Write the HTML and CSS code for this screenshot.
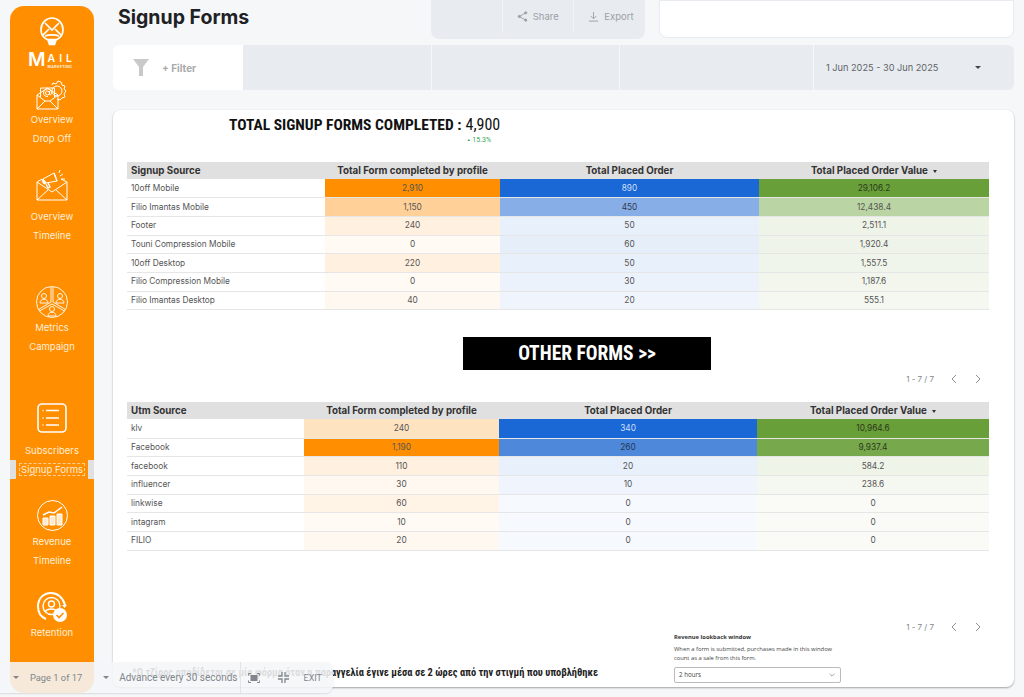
FILE: index.html
```html
<!DOCTYPE html>
<html lang="en">
<head>
    <meta charset="UTF-8">
    <meta name="viewport" content="width=device-width, initial-scale=1.0">
    <title>Signup Forms</title>
    <link rel="stylesheet" href="styles.css">
</head>
<body>
    <div class="app">
        <!-- Sidebar -->
        <nav class="sidebar">
            <svg class="logo-icon" viewBox="0 0 24 29" fill="none" stroke="#fff" stroke-width="1.7">
                <path d="M7 22.500C3 20.500 1 17 1 12.500 1 6 6 1 12 1s11 5 11 11.500c0 4.500-2 8-6 10z"/>
                <path d="M5 6l7 7 7-7M3 18l6-6M21 18l-6-6M5 19c3-1.500 11-1.500 14 0"/>
                <path d="M8 23h8l-1.500 4.500h-5z" fill="#fff"/>
            </svg>
            <div class="logo-text"><span class="logo-m">M</span><span class="logo-rest"><span class="logo-ail">AIL</span><span class="logo-sub">MARKETING</span></span></div>

            <svg class="nav-icon icon-dropoff" viewBox="0 0 32 30" fill="none" stroke="#fff" stroke-width="1">
                <path d="M1 15v14h21V15L11.500 8z"/>
                <path d="M1 15l8 6h5l8-6M1 29l8-8M22 29l-8-8"/>
                <path d="M4.500 17V8h14v9"/>
                <circle cx="11.500" cy="13" r="2"/>
                <path d="M13.500 11v3c0 1.500 2 1 2-1 0-2.500-2-4-4-4s-4 2-4 4 2 4 4.500 3.500"/>
                <path d="M16 5l1-2 3 1 2-3 3 1 1 3 3 1-1 3 2 2-2 3 1 3-3 1-2 2-3-1"/>
                <circle cx="21" cy="11" r="5"/>
            </svg>
            <span class="nav-label">Overview</span>
            <span class="nav-label">Drop Off</span>

            <svg class="nav-icon icon-timeline" viewBox="0 0 32 31" fill="none" stroke="#fff" stroke-width="1">
                <path d="M1 12v18h30V12l-6-3M1 12l5-3M1 12l15 10 15-10M1 30l11-10M31 30L20 20"/>
                <path d="M7 9l11-6 3 8-11 2z"/>
                <path d="M7 9l3 4-2 1-2-3z" fill="#fff"/>
                <path d="M10 14l2 4 2-1-2-4M18 3l3 8" stroke-width="1.400"/>
                <path d="M24 6l3-2M25 9h4M23 3l1-3"/>
            </svg>
            <span class="nav-label">Overview</span>
            <span class="nav-label">Timeline</span>

            <svg class="nav-icon icon-metrics" viewBox="0 0 32 32" fill="none" stroke="#fff" stroke-width=".9">
                <circle cx="16" cy="16" r="15.500"/>
                <path d="M15 1v15L2.500 23.500M17 1v15l12.500 7.500M3.500 25L16 18l12.500 7"/>
                <circle cx="8" cy="10" r="2.500"/>
                <path d="M4 17c0-5 8-5 8 0z"/>
                <circle cx="24" cy="10" r="2.500"/>
                <path d="M20 17c0-5 8-5 8 0z"/>
                <circle cx="16" cy="23" r="2.500"/>
                <path d="M12 30c0-5 8-5 8 0z"/>
            </svg>
            <span class="nav-label">Metrics</span>
            <span class="nav-label">Campaign</span>

            <svg class="nav-icon icon-subs" viewBox="0 0 30 30" fill="none" stroke="#fff" stroke-width="1.600">
                <rect x="1" y="1" width="28" height="28" rx="4"/>
                <path d="M9 7.500h13M9 15h13M9 22h13M5.500 7.500h1M5.500 15h1M5.500 22h1"/>
            </svg>
            <span class="nav-label">Subscribers</span>
            <div class="nav-current">
                <span class="current-tab"></span>
                <span class="nav-label-current">Signup Forms</span>
                <span class="current-tab"></span>
            </div>

            <svg class="nav-icon icon-revenue" viewBox="0 0 31 31" fill="none" stroke="#fff" stroke-width="1">
                <circle cx="15.500" cy="15.500" r="15"/>
                <path d="M6 15l6-3 5 1 8-6" stroke-width="1.400"/>
                <path d="M6 18h5v7H6zM13 16h5v9h-5zM20 14h5v11h-5z" fill="#ffe9cc"/>
            </svg>
            <span class="nav-label">Revenue</span>
            <span class="nav-label">Timeline</span>

            <svg class="nav-icon icon-retention" viewBox="0 0 31 31" fill="none" stroke="#fff" stroke-width="2">
                <path d="M28 13C26 5 20 1 14 1 6 1 1 7 1 14.500 1 20 4 25 9 27"/>
                <path d="M25 13h5l-2.500 3z" fill="#fff" stroke="none"/>
                <circle cx="14.500" cy="14" r="8.500" stroke-width="1.400"/>
                <circle cx="14.500" cy="12" r="3" stroke-width="1.400"/>
                <path d="M8 20c2-4 11-4 12 0" stroke-width="1.400"/>
                <circle cx="23" cy="23" r="7" fill="#fff" stroke="none"/>
                <path d="M19.500 23l2.500 2.500 4.500-4.500" stroke="#ff8f00" stroke-width="1.600"/>
            </svg>
            <span class="nav-label">Retention</span>
        </nav>

        <main class="main">
            <!-- Header -->
            <header class="topbar">
                <h1>Signup Forms</h1>
                <div class="actions">
                    <div class="action-cell"></div>
                    <div class="action-cell">
                        <svg class="action-icon" viewBox="0 0 12 12" fill="none" stroke="#9aa0a6" stroke-width="1">
                            <path d="M9.500 2L2.500 6l7 4"/>
                            <circle cx="9.500" cy="2" r="1.200" fill="#9aa0a6"/>
                            <circle cx="2.500" cy="6" r="1.200" fill="#9aa0a6"/>
                            <circle cx="9.500" cy="10" r="1.200" fill="#9aa0a6"/>
                        </svg>
                        Share
                    </div>
                    <div class="action-cell">
                        <svg class="action-icon" viewBox="0 0 12 12" fill="none" stroke="#9aa0a6" stroke-width="1">
                            <path d="M6 1v7M3 5.500L6 8.500l3-3M1 11h10"/>
                        </svg>
                        Export
                    </div>
                </div>
                <div class="blank-box"></div>
            </header>

            <!-- Filter row -->
            <div class="filterbar">
                <div class="filter-add">
                    <svg class="funnel" viewBox="0 0 16 17"><path d="M0 0h16l-6 8v9H6V8z" fill="#c9c9c9"/></svg>
                    <span>+ Filter</span>
                </div>
                <div class="filter-slot slot-a"></div>
                <div class="filter-slot slot-b"></div>
                <div class="filter-slot slot-c"></div>
                <div class="filter-slot slot-date">
                    <span>1 Jun 2025 - 30 Jun 2025</span>
                    <span class="caret caret-dark"></span>
                </div>
            </div>

            <!-- Report card -->
            <section class="card">
                <div class="total">
                    <span class="total-label">TOTAL SIGNUP FORMS COMPLETED :</span>
                    <div class="total-value">
                        <span class="total-number">4,900</span>
                        <span class="total-delta"><span class="delta-arrow">&#9650;</span> 15.3%</span>
                    </div>
                </div>

                <table class="heat table-one">
                    <thead>
                        <tr>
                            <th class="left">Signup Source</th>
                            <th>Total Form completed by profile</th>
                            <th>Total Placed Order</th>
                            <th>Total Placed Order Value <span class="sort"></span></th>
                        </tr>
                    </thead>
                    <tbody>
                        <tr><td class="left">10off Mobile</td><td class="o-full">2,910</td><td class="b-full">890</td><td class="g-full">29,106.2</td></tr>
                        <tr><td class="left">Filio Imantas Mobile</td><td class="o-40">1,150</td><td class="b-50">450</td><td class="g-40">12,438.4</td></tr>
                        <tr><td class="left">Footer</td><td class="o-12">240</td><td class="b-10">50</td><td class="g-10">2,511.1</td></tr>
                        <tr><td class="left">Touni Compression Mobile</td><td class="o-2">0</td><td class="b-12">60</td><td class="g-9">1,920.4</td></tr>
                        <tr><td class="left">10off Desktop</td><td class="o-12">220</td><td class="b-10">50</td><td class="g-8">1,557.5</td></tr>
                        <tr><td class="left">Filio Compression Mobile</td><td class="o-2">0</td><td class="b-7">30</td><td class="g-6">1,187.6</td></tr>
                        <tr><td class="left">Filio Imantas Desktop</td><td class="o-4">40</td><td class="b-5">20</td><td class="g-4">555.1</td></tr>
                    </tbody>
                </table>

                <a class="other-forms">OTHER FORMS &gt;&gt;</a>

                <div class="pager pager-mid">
                    <span>1 - 7 / 7</span>
                    <svg class="pager-arrow" viewBox="0 0 8 10" fill="none" stroke="#8a8f94"><path d="M6 1L2 5l4 4"/></svg>
                    <svg class="pager-arrow" viewBox="0 0 8 10" fill="none" stroke="#8a8f94"><path d="M2 1l4 4-4 4"/></svg>
                </div>

                <table class="heat table-two">
                    <thead>
                        <tr>
                            <th class="left">Utm Source</th>
                            <th>Total Form completed by profile</th>
                            <th>Total Placed Order</th>
                            <th>Total Placed Order Value <span class="sort"></span></th>
                        </tr>
                    </thead>
                    <tbody>
                        <tr><td class="left">klv</td><td class="o-25">240</td><td class="b-full">340</td><td class="g-full">10,964.6</td></tr>
                        <tr><td class="left">Facebook</td><td class="o-full">1,190</td><td class="b-75">260</td><td class="g-90">9,937.4</td></tr>
                        <tr><td class="left">facebook</td><td class="o-12">110</td><td class="b-10">20</td><td class="g-10">584.2</td></tr>
                        <tr><td class="left">influencer</td><td class="o-4">30</td><td class="b-5">10</td><td class="g-4">238.6</td></tr>
                        <tr><td class="left">linkwise</td><td class="o-6">60</td><td class="b-0">0</td><td class="g-0">0</td></tr>
                        <tr><td class="left">intagram</td><td class="o-2">10</td><td class="b-0">0</td><td class="g-0">0</td></tr>
                        <tr><td class="left">FILIO</td><td class="o-4">20</td><td class="b-0">0</td><td class="g-0">0</td></tr>
                    </tbody>
                </table>

                <div class="card-footer">
                    <p class="footnote">*Ο τζίρος αποδίδεται σε μία φόρμα όταν η παραγγελία έγινε μέσα σε 2 ώρες από την στιγμή που υποβλήθηκε</p>
                    <div class="lookback">
                        <strong>Revenue lookback window</strong>
                        <p>When a form is submitted, purchases made in this window count as a sale from this form.</p>
                        <div class="lookback-select">
                            <span>2 hours</span>
                            <svg class="chevron" viewBox="0 0 10 6" fill="none" stroke="#666"><path d="M1 1l4 4 4-4"/></svg>
                        </div>
                    </div>
                    <div class="pager pager-end">
                        <span>1 - 7 / 7</span>
                        <svg class="pager-arrow" viewBox="0 0 8 10" fill="none" stroke="#8a8f94"><path d="M6 1L2 5l4 4"/></svg>
                        <svg class="pager-arrow" viewBox="0 0 8 10" fill="none" stroke="#8a8f94"><path d="M2 1l4 4-4 4"/></svg>
                    </div>
                </div>
            </section>
        </main>
    </div>

    <!-- Presentation bar, sits over the page -->
    <div class="present-bar">
        <span class="caret"></span>
        <span class="page-count">Page 1 of 17</span>
        <span class="caret caret-second"></span>
        <span class="advance">Advance every 30 seconds</span>
        <svg class="bar-icon icon-fit" viewBox="0 0 12 10" fill="none" stroke="#80868b">
            <rect x="3" y="2.500" width="6" height="5" fill="#80868b"/>
            <path d="M.5 2.500v-2h2.500M9 .5h2.500v2M11.500 7.500v2H9M3 9.500H.5v-2"/>
        </svg>
        <svg class="bar-icon icon-shrink" viewBox="0 0 11 11" fill="none" stroke="#80868b" stroke-width="1.300">
            <path d="M4 0v4H0M7 0v4h4M0 7h4v4M11 7H7v4"/>
        </svg>
        <span class="exit">EXIT</span>
    </div>
</body>
</html>
```

FILE: styles.css
```css
* {
    box-sizing: border-box;
}

html, body {
    margin: 0;
    height: 697px;
    overflow: hidden;
}

body {
    position: relative;
    background-color: #f6f7f9;
    font-family: Inter, "Open Sans", sans-serif;
    color: #444;
}

.app {
    display: flex;
    height: 697px;
    padding-left: 10px;
}

/* Sidebar */
.sidebar {
    width: 84px;
    height: 687px;
    margin-top: 6px;
    flex-shrink: 0;
    display: flex;
    flex-direction: column;
    align-items: center;
    background-color: #ff8f00;
    border-radius: 14px;
    color: #fff;
}

.logo-icon {
    width: 24px;
    height: 29px;
    margin-top: 11px;
}

.logo-text {
    display: flex;
    align-items: flex-end;
    height: 20px;
    margin-top: 3px;
    font-weight: 600;
    line-height: 1;
}

.logo-m {
    font-size: 19px;
}

.logo-rest {
    display: flex;
    flex-direction: column;
    margin-left: 2px;
}

.logo-ail {
    font-size: 10.500px;
    letter-spacing: 4px;
}

.logo-sub {
    font-size: 3.500px;
    letter-spacing: .4px;
    margin-top: 1px;
}

.nav-icon {
    display: block;
    flex-shrink: 0;
}

.icon-dropoff {
    width: 32px;
    height: 30px;
    margin-top: 11px;
}

.icon-timeline {
    width: 32px;
    height: 31px;
    margin-top: 22px;
}

.icon-metrics {
    width: 32px;
    height: 32px;
    margin-top: 41px;
}

.icon-subs {
    width: 30px;
    height: 30px;
    margin-top: 47px;
}

.icon-revenue {
    width: 31px;
    height: 31px;
    margin-top: 21px;
}

.icon-retention {
    width: 31px;
    height: 31px;
    margin-top: 22px;
}

.nav-label {
    display: block;
    height: 19px;
    line-height: 19px;
    font-size: 9.500px;
    color: #ffeeda;
    white-space: nowrap;
}

.icon-timeline + .nav-label {
    margin-top: 6px;
}

.icon-subs + .nav-label {
    margin-top: 8px;
}

.icon-revenue + .nav-label {
    margin-top: 1px;
}

.nav-current {
    width: 100%;
    height: 19px;
    display: flex;
    align-items: center;
    justify-content: space-between;
}

.current-tab {
    width: 6px;
    height: 19px;
    background-color: #e0e0e0;
}

.nav-label-current {
    padding: 0 1px;
    border: 1px dashed #ffcf95;
    font-size: 9.500px;
    line-height: 11px;
    color: #ffeeda;
    white-space: nowrap;
}

/* Main column */
.main {
    width: 901px;
    margin-left: 19px;
}

.topbar {
    display: flex;
    height: 39px;
}

h1 {
    width: 318px;
    margin: 0;
    padding: 5px 0 0 5px;
    font-size: 19.500px;
    font-weight: 700;
    line-height: 24px;
    color: #202124;
    white-space: nowrap;
}

.actions {
    display: flex;
    width: 214px;
    height: 39px;
    background-color: #e8ecf0;
    border-radius: 0 0 8px 8px;
}

.action-cell {
    flex: 1;
    display: flex;
    align-items: center;
    gap: 5px;
    height: 33px;
    padding-left: 14px;
    border-left: 1px solid #f2f4f6;
    font-size: 9.500px;
    color: #9aa0a6;
}

.action-cell:first-child {
    border-left: none;
}

.action-icon {
    width: 11px;
    height: 11px;
}

.blank-box {
    width: 355px;
    height: 38px;
    margin-left: 14px;
    background-color: #fff;
    border: 1px solid #e8ecf0;
    border-radius: 0 0 8px 8px;
}

.filterbar {
    display: flex;
    height: 45px;
    margin-top: 6px;
    border-radius: 6px;
    overflow: hidden;
}

.filter-add {
    display: flex;
    align-items: center;
    width: 130px;
    padding-left: 20px;
    background-color: #fff;
    font-size: 10px;
    font-weight: 700;
    color: #aaa;
}

.funnel {
    width: 16px;
    height: 17px;
    margin-right: 13px;
}

.filter-slot {
    height: 45px;
    background-color: #e8ecf0;
    border-left: 1px solid #f6f7f9;
}

.slot-a {
    width: 188px;
    border-left: none;
}

.slot-b {
    width: 188px;
}

.slot-c {
    width: 194px;
}

.slot-date {
    display: flex;
    align-items: center;
    width: 201px;
    padding: 0 33px 0 12px;
    justify-content: space-between;
    font-size: 9.200px;
    color: #5f6368;
}

.caret {
    display: block;
    width: 0;
    height: 0;
    border-left: 3px solid transparent;
    border-right: 3px solid transparent;
    border-top: 3px solid #80868b;
}

.caret-dark {
    border-top-color: #444;
}

/* Report card */
.card {
    height: 577px;
    margin-top: 20px;
    padding: 0 25px 0 14px;
    background-color: #fff;
    border-radius: 8px;
    box-shadow: 0 1px 2px rgba(0, 0, 0, .35);
}

.total {
    display: flex;
    height: 52px;
    padding: 6px 0 0 102px;
    color: #111;
}

.total-label {
    font-family: "Roboto Condensed", Roboto, sans-serif;
    font-stretch: condensed;
    font-size: 15.500px;
    font-weight: 700;
    line-height: 17px;
    white-space: nowrap;
    margin-top: 1px;
}

.total-value {
    display: flex;
    flex-direction: column;
    align-items: center;
    margin-left: 4px;
    font-family: Roboto, sans-serif;
}

.total-number {
    font-size: 16px;
    line-height: 18px;
    font-stretch: condensed;
}

.total-delta {
    font-size: 7px;
    line-height: 9px;
    margin-top: 1px;
    margin-left: -8px;
    color: #34a853;
    white-space: nowrap;
}

.delta-arrow {
    font-size: 4px;
    vertical-align: 1px;
}

.heat {
    width: 862px;
    border-collapse: collapse;
    table-layout: fixed;
    font-size: 8.300px;
    color: #555;
}

.heat th {
    height: 17px;
    padding: 0;
    background-color: #e0e0e0;
    font-size: 9.750px;
    font-weight: 700;
    color: #333;
    text-align: center;
    white-space: nowrap;
}

.heat td {
    height: 18.700px;
    padding: 0 0 1px;
    border-bottom: 1px solid #e6e6e6;
    text-align: center;
    white-space: nowrap;
}

.heat th.left, .heat td.left {
    padding-left: 4px;
    text-align: left;
}

.table-one th:nth-child(1) { width: 198px; }
.table-one th:nth-child(2) { width: 175px; }
.table-one th:nth-child(3) { width: 259px; }
.table-one th:nth-child(4) { width: 230px; }

.table-two th:nth-child(1) { width: 177px; }
.table-two th:nth-child(2) { width: 195px; }
.table-two th:nth-child(3) { width: 258px; }
.table-two th:nth-child(4) { width: 232px; }

.sort {
    display: inline-block;
    margin-left: 3px;
    vertical-align: middle;
    border-left: 2.500px solid transparent;
    border-right: 2.500px solid transparent;
    border-top: 3px solid #333;
}

/* Heat levels */
.o-full { background-color: #ff8f00; }
.o-40 { background-color: #ffd199; }
.o-25 { background-color: #fee3c1; }
.o-12 { background-color: #fff0df; }
.o-6 { background-color: #fff4e6; }
.o-4 { background-color: #fff8f0; }
.o-2 { background-color: #fffbf4; }

.b-full { background-color: #1a68d6; color: #cfdff6; }
.b-75 { background-color: #4e88db; color: #23384f; }
.b-50 { background-color: #88aee8; color: #2f3b4d; }
.b-12 { background-color: #e6eef9; }
.b-10 { background-color: #e8f0fb; }
.b-7 { background-color: #ecf2fc; }
.b-5 { background-color: #f0f5fd; }
.b-0 { background-color: #f6f9fe; }

.g-full { background-color: #689f38; color: #2b3a1c; }
.g-90 { background-color: #77a84b; color: #2b3a1c; }
.g-40 { background-color: #bad4a3; }
.g-10 { background-color: #eef4e8; }
.g-9 { background-color: #eff4ea; }
.g-8 { background-color: #f0f5eb; }
.g-6 { background-color: #f2f6ed; }
.g-4 { background-color: #f5f8f0; }
.g-0 { background-color: #fafbf7; }

.other-forms {
    display: block;
    width: 248px;
    height: 33px;
    margin: 27px 0 0 336px;
    background-color: #000;
    color: #fff;
    font-family: "Roboto Condensed", Roboto, sans-serif;
    font-stretch: condensed;
    font-size: 19.500px;
    font-weight: 700;
    line-height: 33px;
    text-align: center;
}

.pager {
    display: flex;
    align-items: center;
    justify-content: flex-end;
    height: 18px;
    font-size: 8px;
    color: #80868b;
}

.pager-mid {
    width: 855px;
    margin-bottom: 14px;
}

.pager-arrow {
    width: 8px;
    height: 10px;
    margin-left: 16px;
}

.card-footer {
    display: flex;
    height: 67px;
    margin-top: 67px;
}

.footnote {
    width: 547px;
    margin: 0;
    padding: 0 0 6px 5px;
    align-self: flex-end;
    font-family: Roboto, sans-serif;
    font-stretch: condensed;
    font-size: 10.400px;
    font-weight: 700;
    color: #222;
    white-space: nowrap;
}

.lookback {
    width: 167px;
    padding-top: 15px;
    font-family: "Open Sans", sans-serif;
    font-size: 5.800px;
    color: #444;
}

.lookback strong {
    display: block;
    line-height: 9px;
    color: #333;
}

.lookback p {
    margin: 3px 0 4px;
    line-height: 9px;
}

.lookback-select {
    display: flex;
    align-items: center;
    justify-content: space-between;
    height: 16px;
    padding: 0 5px 0 4px;
    border: 1px solid #bbb;
    border-radius: 2px;
    font-size: 6.200px;
}

.chevron {
    width: 6px;
    height: 4px;
}

.pager-end {
    width: 147px;
    padding-right: 6px;
    align-self: flex-start;
}

/* Presentation bar */
.present-bar {
    position: absolute;
    left: 0;
    top: 662px;
    width: 333px;
    height: 31px;
    display: flex;
    align-items: center;
    background-color: rgba(245, 246, 248, .88);
    border-radius: 0 8px 8px 0;
    box-shadow: 0 1px 2px rgba(0, 0, 0, .12);
    font-family: Roboto, sans-serif;
    font-size: 10px;
    color: #80868b;
}

.present-bar .caret {
    margin-left: 13px;
}

.page-count {
    margin-left: 11px;
    font-size: 9.300px;
    white-space: nowrap;
}

.present-bar .caret-second {
    margin-left: 21px;
}

.advance {
    margin-left: 10px;
    padding-right: 2px;
    border-right: 1px solid #e2e4e7;
    line-height: 31px;
    white-space: nowrap;
}

.bar-icon {
    flex-shrink: 0;
}

.icon-fit {
    width: 12px;
    height: 10px;
    margin-left: 7px;
}

.icon-shrink {
    width: 11px;
    height: 11px;
    margin-left: 18px;
}

.exit {
    margin-left: 15px;
    font-size: 9px;
}
```
